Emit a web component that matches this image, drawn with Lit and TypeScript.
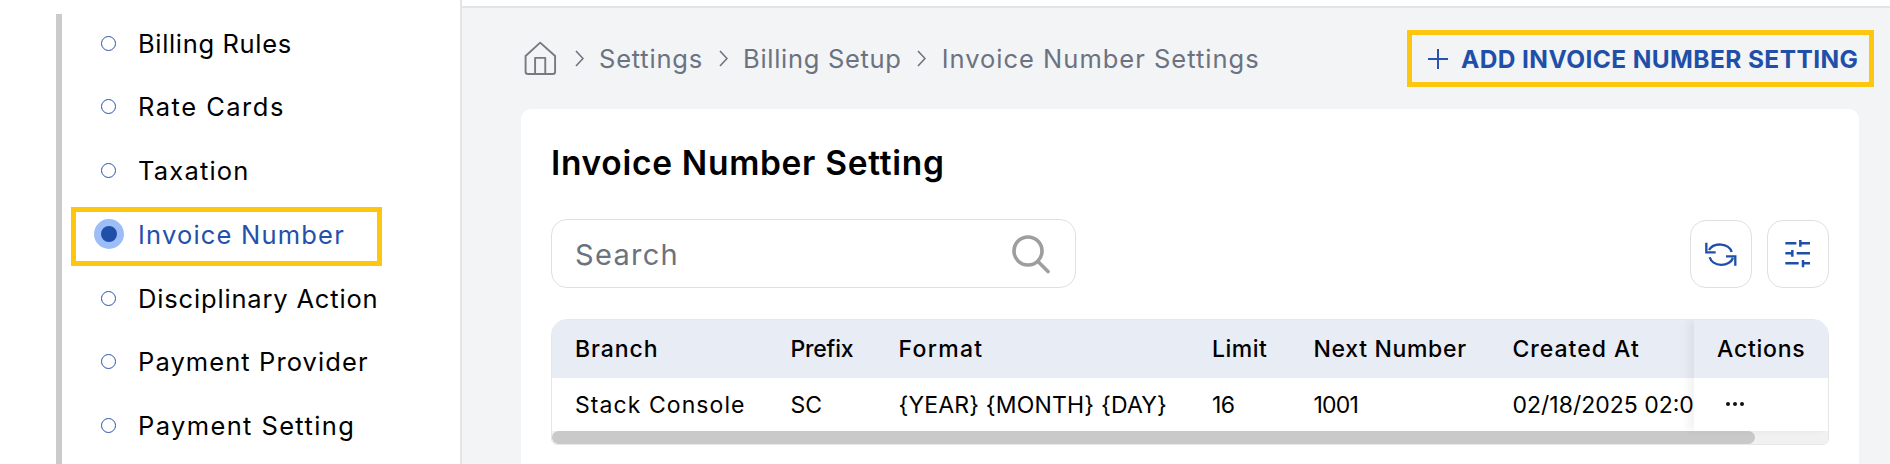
import { LitElement, html, css, svg } from "lit";
import { customElement } from "lit/decorators.js";

type T = [string, number];
const NAV: T[] = [["Billing Rules", 0.66], ["Rate Cards", 1.49], ["Taxation", 1.2], ["Invoice Number", 1.2], ["Disciplinary Action", 0.83], ["Payment Provider", 1.09], ["Payment Setting", 1.38]];
const CRUMBS: T[] = [["Settings", 0.8], ["Billing Setup", 0.7], ["Invoice Number Settings", 1]];
const COLS: T[] = [["Branch", 0.95], ["Prefix", -0.2], ["Format", 1.3], ["Limit", 0.5], ["Next Number", 0.67], ["Created At", 1]];
const ROW: T[] = [["Stack Console", 1.07], ["SC", 0], ["{YEAR} {MONTH} {DAY}", 0.17], ["16", -0.7], ["1001", -0.8], ["02/18/2025 02:00 PM", 0]];

const ls = (v: number) => `letter-spacing:${v}px`;

@customElement("app-root")
export class AppRoot extends LitElement {
  static styles = css`
    :host { display: block; width: 1890px; height: 464px; overflow: hidden; background: #fff; font-family: Inter, "Liberation Sans", sans-serif; color: #000; }
    .page { display: flex; height: 464px; }
    .side { width: 462px; flex: none; box-sizing: border-box; background: #fff; border-right: 2px solid #e3e4e6; padding: 14px 0 0 56px; }
    .list { border-left: 6px solid #cbcbcb; height: 450px; display: flex; flex-direction: column; gap: 5.75px; }
    .item { position: relative; flex: none; width: 311px; height: 58px; margin-left: 9px; display: flex; align-items: center; font-size: 25.5px; white-space: nowrap; }
    .dotbox { width: 67px; flex: none; display: flex; }
    .ring { width: 15px; height: 15px; margin-left: 30px; box-sizing: border-box; border: 1px solid #2a54ab; border-radius: 50%; }
    .active { color: #2450ab; }
    .active .ring { width: 30px; height: 30px; margin-left: 22.5px; border: 7.5px solid #9dbdf8; background: #1f4fa8; }
    .active::after { content: ""; position: absolute; left: 0; top: 2px; width: 311px; height: 59px; box-sizing: border-box; border: 5px solid #fdc60f; }
    .main { flex: 1; min-width: 0; background: #f3f4f6; display: flex; flex-direction: column; }
    .strip { height: 6px; flex: none; background: #fff; border-bottom: 2px solid #e3e4e6; }
    .head { height: 101px; flex: none; display: flex; align-items: center; justify-content: space-between; padding: 0 16px 0 62px; box-sizing: border-box; }
    .crumbs { display: flex; align-items: center; color: #6b7280; font-size: 25.5px; white-space: nowrap; }
    .home { width: 33px; height: 35px; margin-right: 18px; display: block; }
    .chev { width: 9px; height: 17px; margin: 0 15.5px; display: block; flex: none; }
    .chev.first { margin-left: 0; margin-right: 15px; }
    .addbtn { box-sizing: border-box; width: 467px; height: 57px; border: 5px solid #fdc60f; display: flex; align-items: center; padding-left: 16px; color: #1f4fa8; font-weight: 700; font-size: 24.5px; letter-spacing: 0.4px; white-space: nowrap; }
    .addbtn svg { width: 20px; height: 20px; margin-right: 13px; flex: none; }
    .card { flex: 1; margin: 0 31px 0 59px; background: #fff; border-radius: 10px 10px 0 0; padding: 30px 30px 0 30px; box-sizing: border-box; min-height: 0; }
    h1 { margin: 0; font-size: 33.5px; letter-spacing: 0.7px; font-weight: 600; line-height: 48px; height: 48px; white-space: nowrap; }
    .tools { margin-top: 32px; height: 69px; display: flex; align-items: center; justify-content: space-between; }
    .search { box-sizing: border-box; width: 525px; height: 69px; border: 1px solid #e0e0e0; border-radius: 16px; display: flex; align-items: center; justify-content: space-between; padding: 0 24px 0 23px; font-size: 29px; letter-spacing: 1.3px; color: #6b7280; }
    .search span { padding-top: 2px; }
    .search svg { width: 40px; height: 40px; display: block; }
    .tbtns { display: flex; gap: 15px; }
    .tbtn { box-sizing: border-box; width: 62px; height: 68px; border: 1px solid #e0e0e0; border-radius: 16px; display: flex; align-items: center; justify-content: center; }
    .tbtn svg { display: block; }
    .table { margin-top: 31px; box-sizing: border-box; height: 126px; border: 1px solid #e5e7eb; border-radius: 16px 16px 6px 6px; overflow: hidden; display: flex; flex-direction: column; font-size: 23px; }
    .grid { flex: 1; display: flex; min-height: 0; }
    .scroll { flex: 1; min-width: 0; overflow: hidden; }
    .tr { display: grid; grid-template-columns: 215.5px 108px 313.5px 101.5px 199px 240px; white-space: nowrap; padding-left: 23px; width: 1200px; }
    .hd { height: 58px; align-items: center; background: #e8ecf5; font-weight: 500; padding-right: 100px; }
    .bd { height: 53px; align-items: center; }
    .actions { width: 134px; flex: none; box-shadow: -6px 0 8px rgba(0, 0, 0, 0.05); position: relative; background: #fff; }
    .actions .a1 { height: 58px; background: #e8ecf5; display: flex; align-items: center; padding-left: 23px; font-weight: 500; letter-spacing: 0.77px; box-sizing: border-box; }
    .actions .a2 { height: 53px; display: flex; align-items: center; gap: 3px; padding: 0 0 2px 32px; box-sizing: border-box; }
    .dot { width: 4px; height: 4px; border-radius: 50%; background: #111; }
    .bar { height: 13px; flex: none; background: #f1f1f1; }
    .thumb { width: 1203px; height: 13px; background: #c9c9c9; border-radius: 7px; }
  `;

  render() {
    const chevron = (first: boolean) => html`<svg class="chev ${first ? "first" : ""}" viewBox="0 0 9 17" fill="none" stroke="#6b7280" stroke-width="1.6"><path d="M1 1l7 7.5L1 16"/></svg>`;
    return html`<div class="page">
      <aside class="side"><div class="list">
        ${NAV.map(([n, s], i) => html`<div class="item ${i === 3 ? "active" : ""}"><span class="dotbox"><span class="ring"></span></span><span style=${ls(s)}>${n}</span></div>`)}
      </div></aside>
      <main class="main">
        <div class="strip"></div>
        <div class="head">
          <div class="crumbs">
            <svg class="home" viewBox="40 58 104 110" fill="none" stroke="#777a80" stroke-width="6" stroke-linejoin="round"><path d="M45 105L91 63l47 42v50q0 7-8 7H53q-8 0-8-7z"/><path d="M75 162v-51h32v51"/></svg>
            ${CRUMBS.map(([c, s], i) => html`${chevron(i === 0)}<span style=${ls(s)}>${c}</span>`)}
          </div>
          <div class="addbtn">
            <svg viewBox="0 0 20 20" stroke="#2a54ab" stroke-width="2" fill="none"><path d="M10 0v20M0 10h20"/></svg>
            <span>ADD INVOICE NUMBER SETTING</span>
          </div>
        </div>
        <section class="card">
          <h1>Invoice Number Setting</h1>
          <div class="tools">
            <div class="search"><span>Search</span>
              <svg viewBox="0 0 40 40" fill="none" stroke="#9e9e9e" stroke-width="3.6" stroke-linecap="round"><circle cx="17" cy="17" r="14"/><path d="M27 27.5l10 10"/></svg>
            </div>
            <div class="tbtns">
              <div class="tbtn">
                <svg width="35.3" height="30" viewBox="100 115 106 90" fill="none" stroke="#1f4fa8" stroke-width="7">${svg`<path d="M118 148a36 28 0 0 1 68 6M190 172a36 28 0 0 1-70-2M110 126v29h28M197 195v-28h-28"/>`}</svg>
              </div>
              <div class="tbtn">
                <svg width="30" height="32" viewBox="340 115 90 96" fill="none" stroke="#1f4fa8" stroke-width="7.5">${svg`<path d="M347 131h33M392 131h29M392 121v20M347 161h23M368 151v20M381 161h40M347 191h40M400 191h21M400 181v22"/>`}</svg>
              </div>
            </div>
          </div>
          <div class="table">
            <div class="grid">
              <div class="scroll">
                <div class="tr hd">${COLS.map(([c, s]) => html`<span style=${ls(s)}>${c}</span>`)}</div>
                <div class="tr bd">${ROW.map(([c, s]) => html`<span style=${ls(s)}>${c}</span>`)}</div>
              </div>
              <div class="actions">
                <div class="a1">Actions</div>
                <div class="a2"><span class="dot"></span><span class="dot"></span><span class="dot"></span></div>
              </div>
            </div>
            <div class="bar"><div class="thumb"></div></div>
          </div>
        </section>
      </main>
    </div>`;
  }
}
